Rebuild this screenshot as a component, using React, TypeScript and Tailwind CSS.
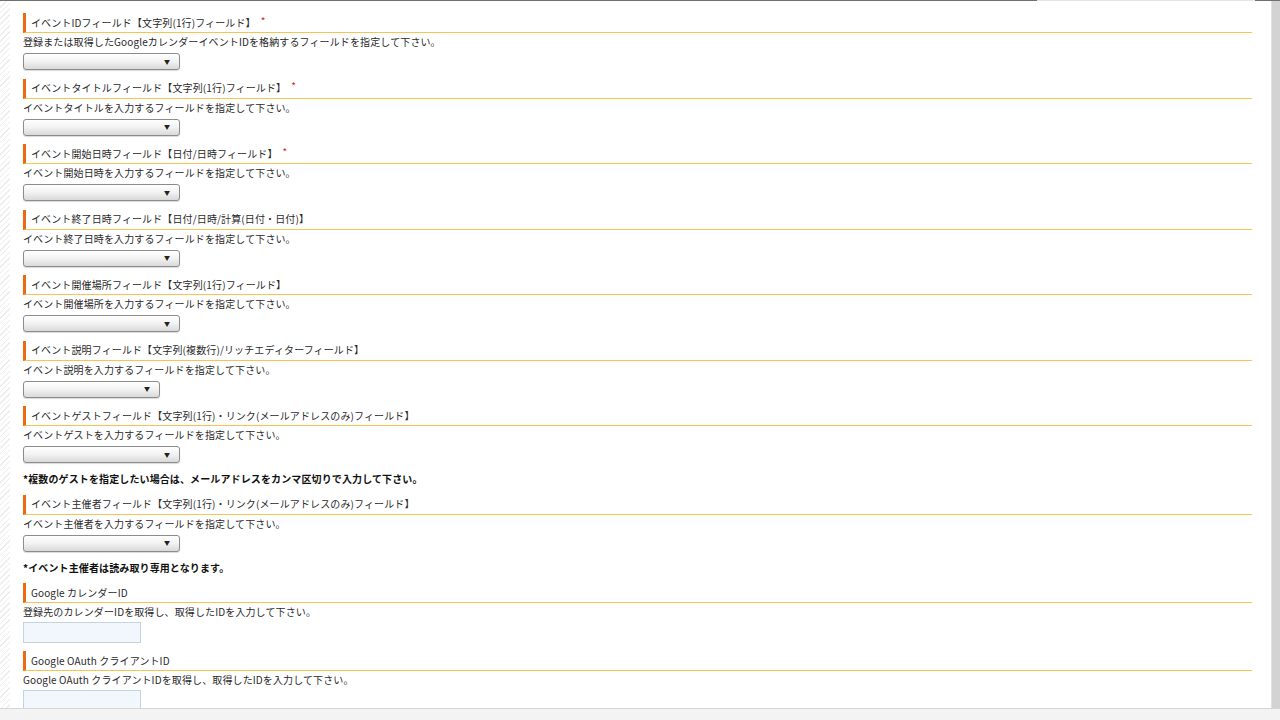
import React from "react";

type Sec = {
  title: string;
  req?: boolean;
  desc: string;
  kind: "select" | "selectNarrow" | "input";
  note?: string;
};

const sections: Sec[] = [
  { title: "イベントIDフィールド【文字列(1行)フィールド】", req: true, desc: "登録または取得したGoogleカレンダーイベントIDを格納するフィールドを指定して下さい。", kind: "select" },
  { title: "イベントタイトルフィールド【文字列(1行)フィールド】", req: true, desc: "イベントタイトルを入力するフィールドを指定して下さい。", kind: "select" },
  { title: "イベント開始日時フィールド【日付/日時フィールド】", req: true, desc: "イベント開始日時を入力するフィールドを指定して下さい。", kind: "select" },
  { title: "イベント終了日時フィールド【日付/日時/計算(日付・日付)】", desc: "イベント終了日時を入力するフィールドを指定して下さい。", kind: "select" },
  { title: "イベント開催場所フィールド【文字列(1行)フィールド】", desc: "イベント開催場所を入力するフィールドを指定して下さい。", kind: "select" },
  { title: "イベント説明フィールド【文字列(複数行)/リッチエディターフィールド】", desc: "イベント説明を入力するフィールドを指定して下さい。", kind: "selectNarrow" },
  { title: "イベントゲストフィールド【文字列(1行)・リンク(メールアドレスのみ)フィールド】", desc: "イベントゲストを入力するフィールドを指定して下さい。", kind: "select", note: "*複数のゲストを指定したい場合は、メールアドレスをカンマ区切りで入力して下さい。" },
  { title: "イベント主催者フィールド【文字列(1行)・リンク(メールアドレスのみ)フィールド】", desc: "イベント主催者を入力するフィールドを指定して下さい。", kind: "select", note: "*イベント主催者は読み取り専用となります。" },
  { title: "Google カレンダーID", desc: "登録先のカレンダーIDを取得し、取得したIDを入力して下さい。", kind: "input" },
  { title: "Google OAuth クライアントID", desc: "Google OAuth クライアントIDを取得し、取得したIDを入力して下さい。", kind: "input" },
];

function Select({ narrow }: { narrow?: boolean }) {
  return (
    <div
      className={
        "mt-[4px] h-[17px] rounded-[3px] border border-[#8c8c8c] bg-gradient-to-b from-[#ffffff] via-[#f2f2f2] to-[#d9d9d9] shadow-[0_1px_1px_rgba(0,0,0,0.15)] flex items-center justify-end " +
        (narrow ? "w-[137px] pr-[9px]" : "w-[157px] pr-[9px]")
      }
    >
      <span className="text-[6px] leading-none text-[#222]">▼</span>
    </div>
  );
}

function Input() {
  return <div className="mt-[3px] h-[21px] w-[118px] border border-[#c5d3de] bg-[#f1f7fc]" />;
}

export default function App() {
  return (
    <div className="w-[1280px] h-[720px] overflow-hidden flex flex-col bg-white font-['Noto_Sans_CJK_JP','Noto_Sans',sans-serif] text-[10px] tracking-[0.12px] text-[#2a2a2a]">
      <div className="h-[1px] flex shrink-0">
        <div className="w-[1037px] bg-[#707070]" />
        <div className="w-[218px] bg-[#e3e7e7]" />
        <div className="flex-1 bg-[#707070]" />
      </div>
      <div className="flex-1 flex min-h-0">
        <div className="w-[10px] shrink-0 bg-[repeating-linear-gradient(135deg,#ececec_0px,#ececec_1px,#ffffff_1px,#ffffff_4px)]" />
        <div className="flex-1 pl-[13px] pr-[19px] pt-[12px] overflow-hidden">
          {sections.map((s, i) => (
            <div key={i} className={s.kind === "input" ? "mb-[8px]" : "mb-[8.5px]"}>
              <div className="h-[20px] border-l-[3px] border-l-[#ec6a12] border-b border-b-[#f8c44f] pl-[5px] flex items-center leading-[14px]">
                <span>{s.title}</span>
                {s.req && <span className="ml-[5px] text-[#e0171b] text-[10px] relative top-[-2px]">*</span>}
              </div>
              <div className="mt-[2px] leading-[14px]">{s.desc}</div>
              {s.kind === "input" ? <Input /> : <Select narrow={s.kind === "selectNarrow"} />}
              {s.note && <div className="mt-[9px] leading-[14px] font-bold text-[#111]">{s.note}</div>}
            </div>
          ))}
        </div>
        <div className="w-[9px] shrink-0 bg-[#d3d3d3] border-l border-l-[#e2e2e2]" />
      </div>
      <div className="h-[12px] shrink-0 border-t border-t-[#d6d6d6] bg-[#f3f3f3]" />
    </div>
  );
}
